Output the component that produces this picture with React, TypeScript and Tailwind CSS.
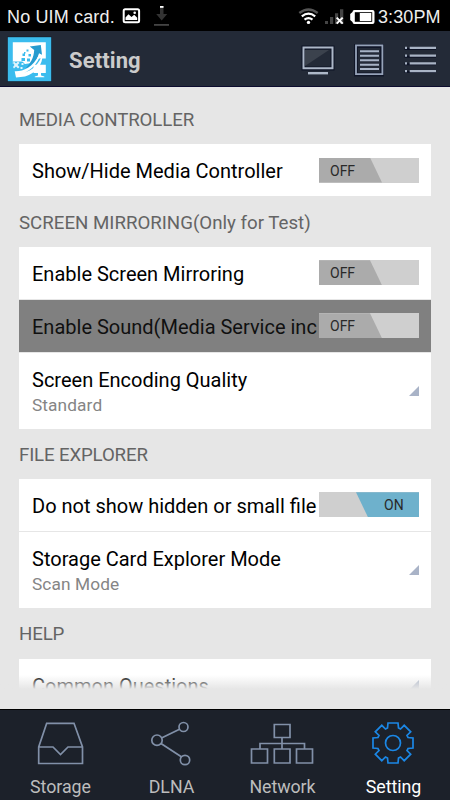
import type { ReactNode } from "react";

function StatusBar() {
  return (
    <div className="flex h-[31px] shrink-0 items-center bg-black text-white">
      <span className="ml-[7px] w-[115px] shrink-0 whitespace-nowrap pt-[2px] font-['Liberation_Sans',Arial,sans-serif] text-[18px] leading-[30px] tracking-[0.15px] text-[#eee]">No UIM card.</span>
      <svg className="h-[31px] w-[50px] shrink-0" viewBox="122 0 50 31" fill="none">
        <rect x="123.7" y="9.2" width="15.4" height="13" rx="1.5" stroke="#fff" strokeWidth="2" />
        <path d="M125.5 20v-2.5l3-3.2 3 2.7 2.7-2.2 3 3v2.2z" fill="#fff" />
        <circle cx="134.7" cy="12.8" r="1.3" fill="#fff" />
        <path d="M160 6h3.5v8h3.7l-5.5 6.5-5.5-6.5h3.8z" fill="#333" />
        <path d="M160 6h3.5v1.8h-3.5z" fill="#fff" />
        <path d="M154 24h15v1.8h-15z" fill="#444" />
      </svg>
      <svg className="ml-[126px] h-[31px] w-[79px] shrink-0" viewBox="298 0 79 31" fill="none">
        <path d="M299.3 13q9.2-7.2 18.4 0" stroke="#555" strokeWidth="2.4" />
        <path d="M301.8 16.4q6.7-5.4 13.4 0M304.5 19.7q4-3.2 8 0" stroke="#fff" strokeWidth="2.2" />
        <circle cx="308.5" cy="22.4" r="1.7" fill="#fff" />
        <path d="M325 21h3v3h-3zM330 17h3.2v7H330zM335 13.2h3.2V24H335zM340 9.3h3.3V24H340z" fill="#444" />
        <path d="m336.7 17.6 6 6m0-6-6 6" stroke="#fff" strokeWidth="2" />
        <path d="M354.5 10h18q2 0 2 2v10q0 2-2 2h-18q-2 0-2-2l-2.3-2v-6l2.3-2q0-2 2-2z" fill="#fff" />
        <rect x="354.8" y="12.2" width="17.4" height="9.6" fill="#000" />
        <rect x="359.8" y="13" width="11.5" height="8" fill="#fff" />
      </svg>
      <span className="ml-[1px] whitespace-nowrap pt-[2px] font-['Liberation_Sans',Arial,sans-serif] text-[18px] leading-[30px] tracking-[0.1px] text-[#eee]">3:30PM</span>
    </div>
  );
}

function Logo() {
  return (
    <svg className="ml-[7px] h-[46px] w-[45px] shrink-0" viewBox="0 0 45 46" fill="none">
      <rect width="45" height="46" fill="#1b2432" />
      <rect x=".8" y="1.2" width="43.4" height="44" fill="#3bbcee" />
      <path d="M5.8 6.2h33v16.3h-8.6L25 27l-7 1H5.8z" fill="#fff" />
      <path d="M22.8 10.6 33.8 9l1.2 9.8-3-1.6c-1.8 7.6-7 12.2-13.6 15.4 5.2-5.6 8.4-10.6 8.8-18.6z" fill="#269bcf" />
      <path d="M5.8 25.5h9.5l3.500 3-4 6H5.8z" fill="#3bbcee" />
      <path d="M35.400 18.600C36 29 29 37 18 40.600l-9 1-1.300-6.300c8 .400 18-3.200 24.600-17l1 .400c-3 9.500-9 15-16.300 18 8.600-2.300 15-8.500 18.400-18.100z" fill="#fff" />
      <path d="M19.500 13.500h2v2h-2zm-4 4H18V20h-2.500zm6 .5H24v2.500h-2.500zm-7 4H18v3h-3.500zm5.500.5h3v3h-3zm-3-6.500h1.500v1.500H17z" fill="#3bbcee" />
      <path d="m7 25.500 2 2 2-2 1.500 1.500-2 2 2 2-1.500 1.500-2-2-2 2L6 31l1.500-2L6 27zm7.500 1.500h2v2h-2zm-1 4h2v2h-2zm4-4.500H19V28h-1.500z" fill="#fff" opacity=".85" />
      <path d="M26.500 28.700h12.300v8.200H34v2.500l3.300 1v.9h-9.500v-.9l3.200-1v-2.500h-4.500z" fill="#fff" />
    </svg>
  );
}

function Header() {
  return (
    <header className="flex h-[56px] shrink-0 items-center border-b border-[#0c0c2e] bg-[#232a37]">
      <Logo />
      <h1 className="ml-[17px] mt-[4px] font-[Roboto,sans-serif] text-[22px] font-bold leading-7 tracking-[0.1px] text-[#cbcbcb]">Setting</h1>
      <svg className="ml-auto mr-[12px] h-[55px] w-[138px]" viewBox="300 31 138 55" fill="none">
        <path d="M303.5 47.5h29v21h-29z" stroke="#0c1224" strokeWidth="4" />
        <path d="m305 66 24-16h-24z" fill="#3b424d" />
        <path d="M303.5 47.5h29v20.8h-29z" stroke="#adb8c8" strokeWidth="2" />
        <path d="M308 73.200h20" stroke="#adb8c8" strokeWidth="2.4" />
        <path d="M356 46h26v28.5h-26z" stroke="#101628" strokeWidth="4" />
        <path d="M356 45.300h26.400v28.800H356z" stroke="#96a3b9" strokeWidth="1.8" />
        <path d="M360 51.300h19m-19 4.500h19m-19 4.500h19m-19 4.400h19m-19 4.400h19" stroke="#a7b3c5" strokeWidth="2" />
        <path d="M404.500 49h31.500m-31.500 7.700h31.500m-31.500 7.600h31.500m-31.500 7.700h31.500" stroke="#0c1224" strokeWidth="2" />
        <path d="M405 47.800h2m2.700 0H436m-31 7.800h2m2.700 0H436m-31 7.800h2m2.700 0H436m-31 7.700h2m2.700 0H436" stroke="#a9b4c5" strokeWidth="2.3" />
      </svg>
    </header>
  );
}

function SectionTitle({ children, className }: { children: string; className: string }) {
  return (
    <h2 className={`flex shrink-0 items-center whitespace-nowrap font-[Roboto,sans-serif] text-[18.7px] font-normal text-[#646464] ${className}`}>
      {children}
    </h2>
  );
}

function Toggle({ on }: { on?: boolean }) {
  return (
    <div className="mt-[13.3px] h-[25px] w-[100px] shrink-0 bg-[#cfcfcf] font-[Roboto,sans-serif] text-[14px] leading-[26px]">
      <div className={`h-full ${on ? "ml-auto w-[63px] bg-[#6eb1cc] [clip-path:polygon(0_0,100%_0,100%_100%,12px_100%)]" : "w-[63px] bg-[#ababab] [clip-path:polygon(0_0,51px_0,63px_100%,0_100%)]"}`}>
        <span className={`block text-[#292929] ${on ? "pl-[28px]" : "pl-[11px]"}`}>{on ? "ON" : "OFF"}</span>
      </div>
    </div>
  );
}

function ToggleRow({ label, on, disabled }: { label: string; on?: boolean; disabled?: boolean }) {
  return (
    <div className={`flex h-[52px] shrink-0 items-start justify-between pl-[13px] pr-[12px] ${disabled ? "bg-[#808080]" : "bg-white"}`}>
      <span className={`w-[287px] whitespace-nowrap pt-[13px] font-[Roboto,sans-serif] text-[20px] leading-7 ${disabled ? "text-[#101010]" : "text-black"}`}>{label}</span>
      <Toggle on={on} />
    </div>
  );
}

function Corner() {
  return <div className="h-[10px] w-[10px] bg-[#a9b3c7] [clip-path:polygon(100%_0,100%_100%,0_100%)]" />;
}

function ChoiceRow({ label, value }: { label: string; value: string }) {
  return (
    <div className="flex h-[76px] shrink-0 items-center justify-between bg-white pl-[13px] pr-[12px]">
      <div className="pt-[2px] font-[Roboto,sans-serif]">
        <div className="whitespace-nowrap text-[20px] leading-[26px] text-black">{label}</div>
        <div className="text-[17.3px] leading-[24px] tracking-[0.1px] text-[#858585]">{value}</div>
      </div>
      <Corner />
    </div>
  );
}

function Tab({ label, active, children }: { label: string; active?: boolean; children: ReactNode }) {
  return (
    <div className={`flex h-full w-[111px] flex-col items-center font-[Roboto,sans-serif] text-[17.8px] ${active ? "text-white" : "text-[#bdbdbd]"}`}>
      <svg className="mt-[1px] h-[65px] w-[80px]" viewBox="0 0 80 65" fill="none" stroke={active ? "#1b87e5" : "#8190a8"} strokeWidth="1.7">{children}</svg>
      <span className="whitespace-nowrap pl-[2px] leading-[22px] tracking-[-0.05px]">{label}</span>
    </div>
  );
}

export default function App() {
  return (
    <div className="flex h-[800px] w-[450px] flex-col overflow-hidden bg-[#e6e6e6]">
      <StatusBar />
      <Header />
      <main className="relative h-[602px] shrink-0 overflow-hidden px-[19px]">
        <div className="flex w-[412px] flex-col">
          <SectionTitle className="h-[57.3px] pt-[9px] tracking-[-0.13px]">MEDIA CONTROLLER</SectionTitle>
          <ToggleRow label="Show/Hide Media Controller" />
          <SectionTitle className="h-[50.6px] pt-[2px]">SCREEN MIRRORING(Only for Test)</SectionTitle>
          <div className="flex flex-col gap-px">
            <div className="h-[52.1px] bg-white"><ToggleRow label="Enable Screen Mirroring" /></div>
            <ToggleRow label="Enable Sound(Media Service inc" disabled />
            <ChoiceRow label="Screen Encoding Quality" value="Standard" />
          </div>
          <SectionTitle className="h-[50px] pt-[2px] tracking-[-0.16px]">FILE EXPLORER</SectionTitle>
          <div className="flex flex-col gap-px">
            <ToggleRow label="Do not show hidden or small file" on />
            <ChoiceRow label="Storage Card Explorer Mode" value="Scan Mode" />
          </div>
          <SectionTitle className="h-[51px] pt-[2px] tracking-[-0.16px]">HELP</SectionTitle>
          <div className="flex h-[52px] items-center justify-between bg-white pl-[13px] pr-[12px] font-[Roboto,sans-serif] text-[20px]">
            <span className="pt-[2px]">Common Questions</span>
            <Corner />
          </div>
        </div>
        <div className="absolute inset-x-0 bottom-0 h-[14px] bg-linear-to-b from-[#e6e6e600] to-[#e6e6e6]" />
      </main>
      <nav className="mt-auto flex h-[91px] shrink-0 border-t border-black bg-[#1c212a] pl-[4px]">
        <Tab label="Storage">
          <path d="m26.700 12.300-8 23.700v16.500h43.800V36l-8.500-23.700zM18.700 36h14.300l7.500 7.500 7.500-7.500h14.500" />
        </Tab>
        <Tab label="DLNA">
          <circle cx="26" cy="29.2" r="5.2" /><circle cx="52.5" cy="16" r="4.5" /><circle cx="54" cy="49" r="4.7" />
          <path d="m30.500 27 18-8.800M30 32.500l20.300 13.200" />
        </Tab>
        <Tab label="Network">
          <path d="M32.300 13.500h15.700v13H32.300zM9.500 38h16v14h-16zm22.800 0H48v14H32.300zm22.200 0h16v14h-16zM40 26.500V38M18 38v-5.500H62.500V38" />
        </Tab>
        <Tab label="Setting" active>
          <path transform="translate(40 32)" d="M-5-20H5L5.500-15 7.500-14 11.200-17.700 17.700-11.200 14-7.500 15-5.500 20-5V5L15 5.500 14 7.500 17.700 11.200 11.200 17.700 7.500 14 5.500 15 5 20H-5L-5.500 15-7.500 14-11.200 17.700-17.700 11.200-14 7.500-15 5.500-20 5V-5L-15-5.500-14-7.500-17.700-11.200-11.200-17.700-7.500-14-5.500-15Z" />
          <circle cx="40" cy="32" r="7.5" />
        </Tab>
      </nav>
    </div>
  );
}
